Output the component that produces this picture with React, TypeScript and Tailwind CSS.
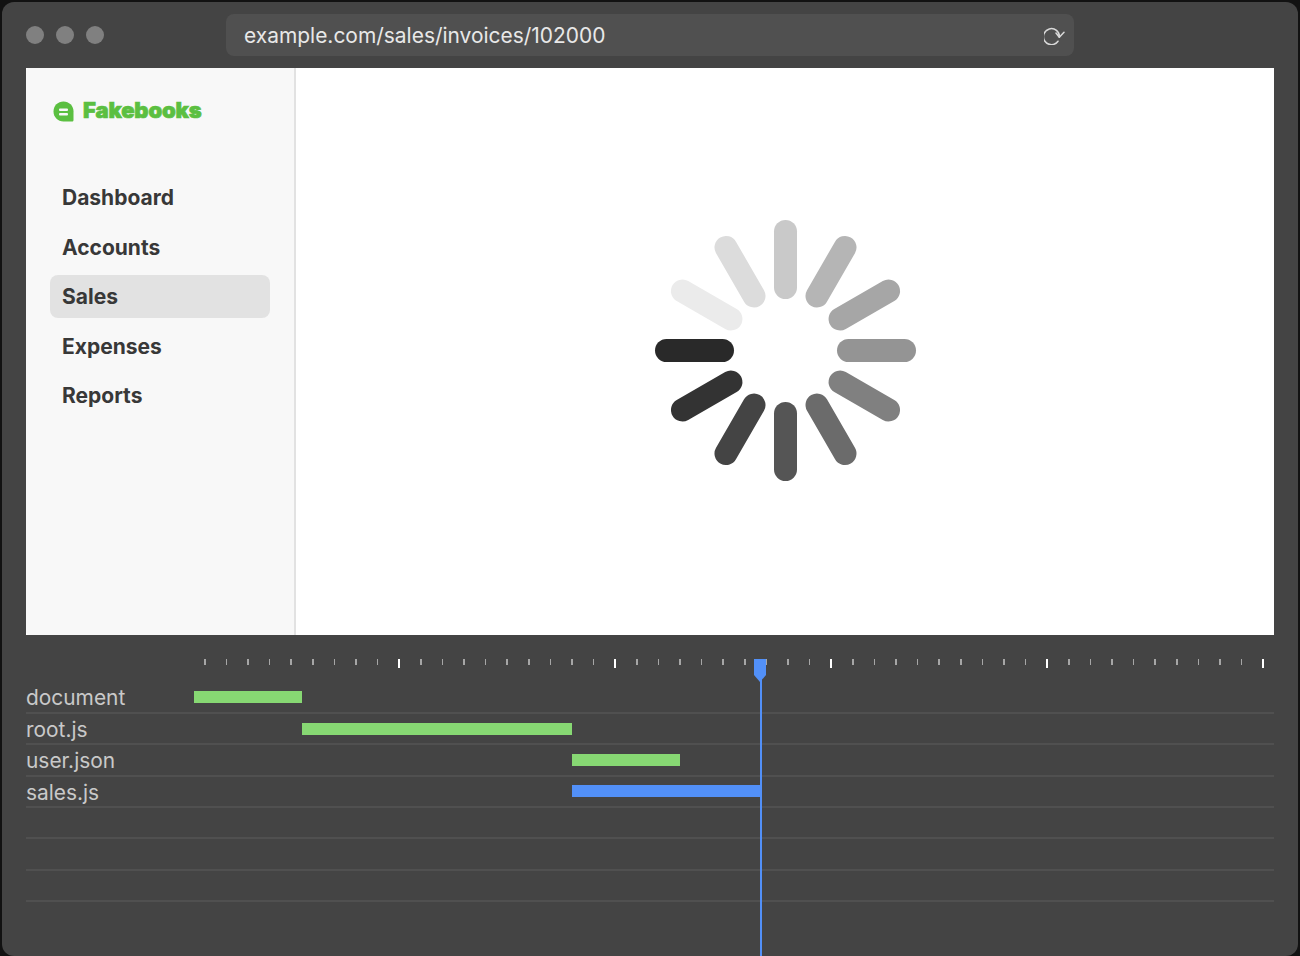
const navItems = ["Dashboard", "Accounts", "Sales", "Expenses", "Reports"];

const spinnerColors = [
  "#c9c9c9",
  "#b5b5b5",
  "#a6a6a6",
  "#949494",
  "#808080",
  "#6b6b6b",
  "#555555",
  "#444444",
  "#333333",
  "#292929",
  "#ebebeb",
  "#dcdcdc",
];

const rows = [
  { label: "document", offset: "ml-0", width: "w-[108px]", color: "bg-[#87d873]" },
  { label: "root.js", offset: "ml-[108px]", width: "w-[270px]", color: "bg-[#87d873]" },
  { label: "user.json", offset: "ml-[378px]", width: "w-[108px]", color: "bg-[#87d873]" },
  { label: "sales.js", offset: "ml-[378px]", width: "w-[188px]", color: "bg-[#5290f8]" },
  { label: "" },
  { label: "" },
  { label: "" },
];

function Spinner() {
  return (
    <svg width="263" height="263" viewBox="-131.5 -131.5 263 263" aria-hidden="true">
      {spinnerColors.map((color, i) => (
        <rect
          key={i}
          x="-11.5"
          y="-130.5"
          width="23"
          height="79"
          rx="11.5"
          fill={color}
          transform={`rotate(${i * 30})`}
        />
      ))}
    </svg>
  );
}

function Logo() {
  return (
    <div className="flex items-center gap-[9px] pl-[27px]">
      <svg width="21" height="21" viewBox="0 0 21 21" className="mt-[2px]" aria-hidden="true">
        <path
          d="M10.5 0.5C16 0.5 20.5 4.8 20.5 10.3V19C20.5 20 19.8 20.5 19 20.5H10.5C4.8 20.5 0.5 16 0.5 10.5C0.5 4.8 4.8 0.5 10.5 0.5Z"
          fill="#5bbf41"
        />
        <rect x="6" y="7.5" width="9" height="2.4" rx="1" fill="#f8f8f8" />
        <rect x="6" y="12" width="9" height="2.4" rx="1" fill="#f8f8f8" />
      </svg>
      <span className="-translate-y-[1px] text-[22px] leading-none font-black tracking-[-0.15px] text-[#5bbf41] [-webkit-text-stroke:0.7px_#5bbf41]">
        Fakebooks
      </span>
    </div>
  );
}

function Sidebar() {
  return (
    <aside className="flex w-[270px] shrink-0 flex-col rounded-l-[4px] border-r-2 border-[#e2e2e2] bg-[#f8f8f8] pt-[31px]">
      <Logo />
      <nav className="mt-[54.3px] flex w-[244px] flex-col gap-[6.5px] pl-[24px]">
        {navItems.map((item) => (
          <div
            key={item}
            className={`flex h-[43px] items-center rounded-lg px-3 text-[21px] font-bold text-[#383838] ${
              item === "Sales" ? "bg-[#e2e2e2]" : ""
            }`}
          >
            {item}
          </div>
        ))}
      </nav>
    </aside>
  );
}

function Ruler() {
  return (
    <div className="ml-[178px] flex h-[9px] w-[1060px] items-start justify-between">
      {Array.from({ length: 50 }).map((_, i) => {
        const step = i % 10;
        const thin = step === 1 || step === 3 || step === 6 || step === 8;
        return (
          <div
            key={i}
            className={
              step === 9
                ? "h-[9px] w-[2px] bg-white"
                : thin
                  ? "h-[6px] w-[1px] bg-[#a6a6a6]"
                  : "h-[6px] w-[2px] bg-[#a6a6a6]"
            }
          />
        );
      })}
    </div>
  );
}

function Timeline() {
  return (
    <div className="relative flex-1 pt-[24px]">
      <Ruler />
      <div className="mt-[14.75px]">
        {rows.map((row, i) => (
          <div key={i} className="flex h-[31.35px] items-center border-b-2 border-[#505050]">
            <div className="w-[168px] shrink-0 pt-[3px] text-[20.9px] leading-none text-[#c9c9c9]">{row.label}</div>
            {row.width && <div className={`h-[12px] ${row.offset} ${row.width} ${row.color}`} />}
          </div>
        ))}
      </div>
      {/* playhead */}
      <div className="absolute top-[24px] bottom-0 left-[734px] w-[2px] bg-[#5290f8]" />
      <svg width="12" height="23" viewBox="0 0 12 23" className="absolute top-[24px] left-[728px]" aria-hidden="true">
        <path d="M0 0H12V16L6 23L0 16Z" fill="#5290f8" />
      </svg>
    </div>
  );
}

export default function App() {
  return (
    <div className="h-[956px] w-[1300px] overflow-hidden bg-[#121212] px-[2px] pt-[2px] font-['Inter',sans-serif]">
      <div className="flex h-[954px] flex-col rounded-[12px] bg-[#444444] px-[24px]">
        <div className="flex h-[66px] shrink-0 items-center">
          <div className="flex gap-[12px]">
            <div className="h-[18px] w-[18px] rounded-full bg-[#808080]" />
            <div className="h-[18px] w-[18px] rounded-full bg-[#808080]" />
            <div className="h-[18px] w-[18px] rounded-full bg-[#808080]" />
          </div>
          <div className="ml-[122px] flex h-[42px] w-[848px] items-center justify-between rounded-lg bg-[#505050] pr-[9px] pl-[18px]">
            <span className="pt-[2px] text-[20.95px] text-[#e8e8e8]">example.com/sales/invoices/102000</span>
            <svg width="21" height="20" viewBox="0 0 21 20" fill="none" stroke="#d9d9d9" strokeWidth="1.5" aria-hidden="true">
              <path d="M15.4 12.2A8 8 0 1 0 14 16.2" strokeLinecap="round" />
              <path d="M12 8L15.3 12.3L20 7.3" strokeLinecap="round" strokeLinejoin="round" />
            </svg>
          </div>
        </div>
        <div className="flex h-[567px] shrink-0 bg-white">
          <Sidebar />
          <main className="flex flex-1 items-center justify-center">
            <div className="mb-[2px]">
              <Spinner />
            </div>
          </main>
        </div>
        <Timeline />
      </div>
    </div>
  );
}
